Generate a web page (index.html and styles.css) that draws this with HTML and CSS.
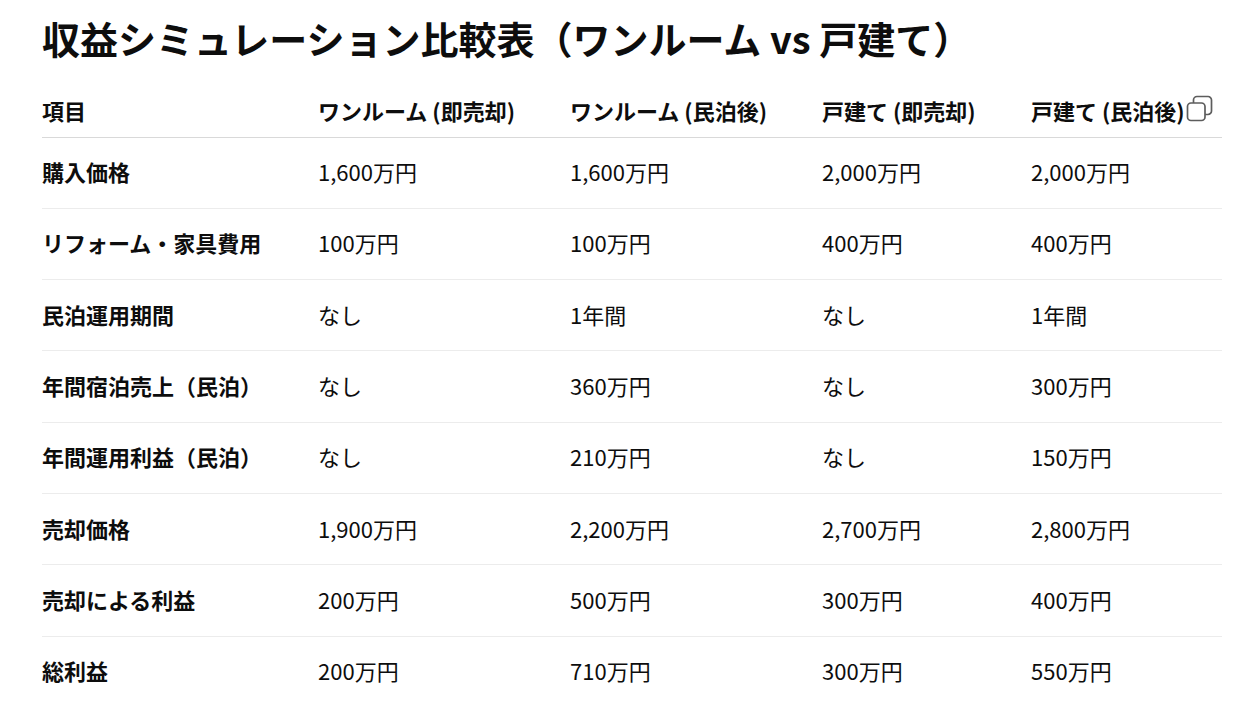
FILE: index.html
```html
<!DOCTYPE html>
<html lang="ja">
<head>
<meta charset="utf-8">
<link rel="stylesheet" href="styles.css">
</head>
<body>
<main class="page">
  <h1 class="title">収益シミュレーション比較表（ワンルーム vs 戸建て）</h1>
  <div class="table-wrap">
    <table class="sim">
      <colgroup>
        <col class="c1"><col class="c2"><col class="c3"><col class="c4"><col class="c5">
      </colgroup>
      <thead>
        <tr>
          <th>項目</th>
          <th>ワンルーム (即売却)</th>
          <th>ワンルーム (民泊後)</th>
          <th>戸建て (即売却)</th>
          <th>戸建て (民泊後)</th>
        </tr>
      </thead>
      <tbody>
        <tr><td>購入価格</td><td>1,600万円</td><td>1,600万円</td><td>2,000万円</td><td>2,000万円</td></tr>
        <tr><td>リフォーム・家具費用</td><td>100万円</td><td>100万円</td><td>400万円</td><td>400万円</td></tr>
        <tr><td>民泊運用期間</td><td>なし</td><td>1年間</td><td>なし</td><td>1年間</td></tr>
        <tr><td>年間宿泊売上（民泊）</td><td>なし</td><td>360万円</td><td>なし</td><td>300万円</td></tr>
        <tr><td>年間運用利益（民泊）</td><td>なし</td><td>210万円</td><td>なし</td><td>150万円</td></tr>
        <tr><td>売却価格</td><td>1,900万円</td><td>2,200万円</td><td>2,700万円</td><td>2,800万円</td></tr>
        <tr><td>売却による利益</td><td>200万円</td><td>500万円</td><td>300万円</td><td>400万円</td></tr>
        <tr><td>総利益</td><td>200万円</td><td>710万円</td><td>300万円</td><td>550万円</td></tr>
      </tbody>
    </table>
    <button class="copy" aria-label="copy">
      <svg width="28" height="28" viewBox="0 0 28 28" fill="none" stroke="#5d5d5d" stroke-width="1.7">
        <path d="M7.5 9 V6 a3.5 3.5 0 0 1 3.5-3.5 h11 a3.5 3.5 0 0 1 3.5 3.5 v11 a3.5 3.5 0 0 1 -3.5 3.5 h-3"/>
        <rect x="1.5" y="9" width="17.5" height="17.5" rx="3.5"/>
      </svg>
    </button>
  </div>
</main>
</body>
</html>
```

FILE: styles.css
```css
* { box-sizing: border-box; }
html, body { margin: 0; padding: 0; background: #fff; }
body {
  font-family: "Noto Sans CJK JP", "Noto Sans", sans-serif;
  color: #0d0d0d;
}
.page { padding: 12px 28px 0 42px; }
.title {
  margin: 0 0 22px 0;
  font-size: 38px;
  font-weight: 700;
  line-height: 52px;
  white-space: nowrap;
}
.table-wrap { position: relative; width: 1180px; }
.sim {
  width: 1180px;
  border-collapse: collapse;
  table-layout: fixed;
  font-size: 22px;
}
.c1 { width: 276px; }
.c2 { width: 252px; }
.c3 { width: 252px; }
.c4 { width: 209px; }
.c5 { width: 191px; }
.sim th, .sim td {
  text-align: left;
  padding: 0 0 3px 0;
  white-space: nowrap;
  vertical-align: middle;
}
.sim th {
  font-weight: 700;
  height: 51px;
  border-bottom: 1px solid #d9d9d9;
}
.sim td {
  height: 71.3px;
  border-bottom: 1px solid #ececec;
}
.sim td:first-child { font-weight: 700; }
.sim tbody tr:last-child td { border-bottom: none; }
.copy {
  position: absolute;
  top: 8px;
  left: 1144px;
  padding: 0;
  border: 0;
  background: none;
  width: 28px;
  height: 28px;
}
.copy svg { display: block; }
```
